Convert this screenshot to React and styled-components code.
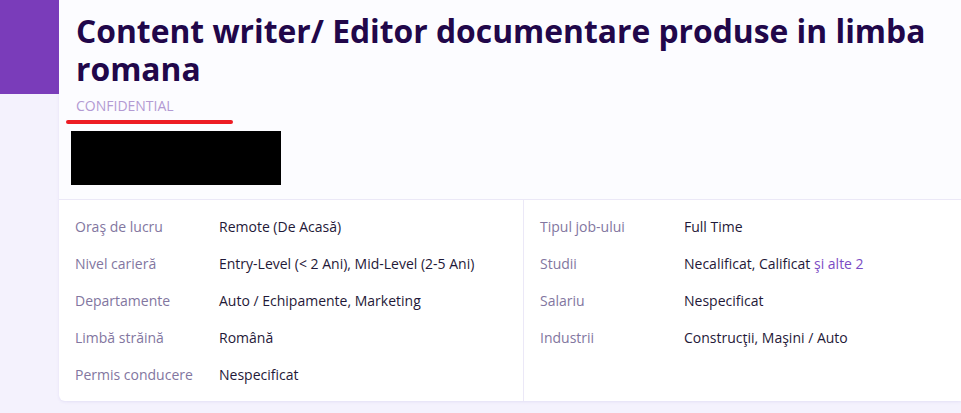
import React from 'react';
import styled, { createGlobalStyle } from 'styled-components';

const GlobalStyle = createGlobalStyle`
  html, body {
    margin: 0;
    padding: 0;
    background: #f4f2fd;
    font-family: 'Open Sans', 'Noto Sans', sans-serif;
  }
`;

const Page = styled.div`
  display: flex;
  align-items: flex-start;
  height: 413px;
  overflow: hidden;
`;

const Accent = styled.div`
  width: 59px;
  height: 94px;
  flex-shrink: 0;
  background: #7a3cba;
`;

const Card = styled.div`
  flex: 1;
  height: 401px;
  background: #ffffff;
  border-radius: 0 0 0 6px;
  box-shadow: 0 1px 3px rgba(120, 100, 200, 0.12);
  display: flex;
  flex-direction: column;
  overflow: hidden;
`;

const Header = styled.div`
  background: #fcfcff;
  padding: 12px 20px 14px 17px;
  border-bottom: 1px solid #ebe8f7;
`;

const Title = styled.h1`
  margin: 0;
  font-size: 31.8px;
  line-height: 38px;
  font-weight: 700;
  color: #21074a;
`;

const Company = styled.div`
  position: relative;
  margin-top: 9px;
  font-size: 14px;
  line-height: 18px;
  color: #b39ad3;
  text-transform: uppercase;

  /* red marker stroke under the company name */
  &::after {
    content: '';
    position: absolute;
    left: -10px;
    top: 23px;
    width: 167px;
    height: 4px;
    border-radius: 2px;
    background: #ed1c24;
  }
`;

const Redacted = styled.div`
  margin: 16px 0 0 -5px;
  width: 210px;
  height: 54px;
  background: #000;
`;

const Details = styled.div`
  flex: 1;
  display: grid;
  grid-template-columns: 464px 1fr;
`;

const Column = styled.div`
  padding: 8px 16px 0;
  border-left: ${p => (p.$divided ? '1px solid #ebe8f7' : 'none')};
`;

const Row = styled.div`
  display: grid;
  grid-template-columns: 144px 1fr;
  height: 37px;
  align-items: center;
  font-size: 14px;
`;

const Label = styled.span`
  color: #8276a0;
`;

const Value = styled.span`
  color: #1f1938;
`;

const More = styled.span`
  color: #7b4cc4;
`;

const left = [
  ['Oraş de lucru', 'Remote (De Acasă)'],
  ['Nivel carieră', 'Entry-Level (< 2 Ani), Mid-Level (2-5 Ani)'],
  ['Departamente', 'Auto / Echipamente, Marketing'],
  ['Limbă străină', 'Română'],
  ['Permis conducere', 'Nespecificat'],
];

const right = [
  ['Tipul job-ului', 'Full Time'],
  ['Studii', <>Necalificat, Calificat <More>şi alte 2</More></>],
  ['Salariu', 'Nespecificat'],
  ['Industrii', 'Construcţii, Maşini / Auto'],
];

export default function App() {
  return (
    <>
      <GlobalStyle />
      <Page>
        <Accent />
        <Card>
          <Header>
            <Title>Content writer/ Editor documentare produse in limba romana</Title>
            <Company>Confidential</Company>
            <Redacted />
          </Header>
          <Details>
            <Column>
              {left.map(([k, v]) => (
                <Row key={k}>
                  <Label>{k}</Label>
                  <Value>{v}</Value>
                </Row>
              ))}
            </Column>
            <Column $divided>
              {right.map(([k, v]) => (
                <Row key={k}>
                  <Label>{k}</Label>
                  <Value>{v}</Value>
                </Row>
              ))}
            </Column>
          </Details>
        </Card>
      </Page>
    </>
  );
}
